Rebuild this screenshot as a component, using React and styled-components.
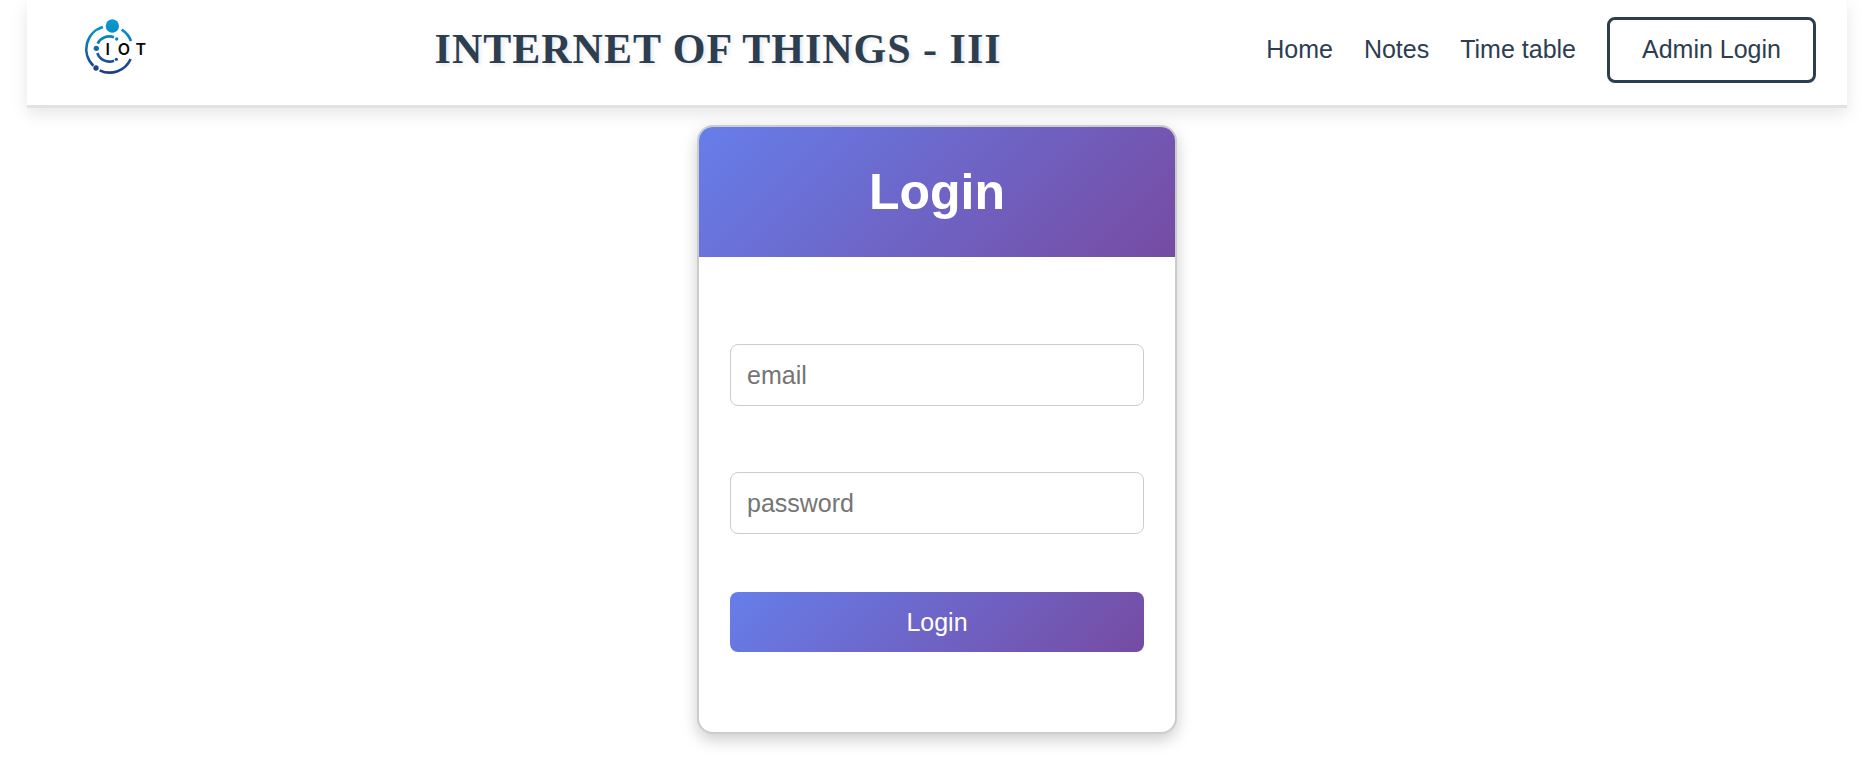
import React from "react";
import styled, { createGlobalStyle } from "styled-components";

const GlobalStyle = createGlobalStyle`
  *, *::before, *::after { box-sizing: border-box; }
  body {
    margin: 0;
    background: #fff;
    font-family: Arial, "Liberation Sans", sans-serif;
    font-size: 25px;
  }
`;

const brandGradient = "linear-gradient(135deg, #667eea 0%, #764ba2 100%)";

const Page = styled.div`
  padding: 0 29px 24px 27px;
`;

const Header = styled.header`
  display: flex;
  align-items: center;
  justify-content: space-between;
  padding: 17px 31px 22px 32px;
  background: #fff;
  border-bottom: 3px solid #e2e2e2;
  box-shadow: 0 6px 16px rgba(0, 0, 0, 0.1);
`;

const LogoLink = styled.a`
  display: block;
  padding: 0 23px 8px 24px;

  svg { display: block; }
`;

const SiteTitle = styled.h1`
  margin: 0;
  padding-bottom: 2px;
  color: #2c3e50;
  font-family: "Times New Roman", "Liberation Serif", serif;
  font-size: 42px;
  line-height: 48px;
  font-weight: 700;
  letter-spacing: 1px;
  text-shadow: 2px 2px 4px rgba(0, 0, 0, 0.1);
`;

const Nav = styled.nav`
  display: flex;
  align-items: center;
  gap: 31px;
`;

const NavLink = styled.a`
  padding-bottom: 2px;
  color: #2c3e50;
  line-height: 28px;
  text-decoration: none;
`;

const AdminButton = styled.button`
  padding: 15px 32px 17px;
  border: 3px solid #2c3e50;
  border-radius: 8px;
  background: transparent;
  color: #2c3e50;
  font: inherit;
  line-height: 28px;
  cursor: pointer;
`;

const Card = styled.main`
  width: 100%;
  max-width: 480px;
  margin: 17px auto 0;
  overflow: hidden;
  border: 2px solid #ccc;
  border-radius: 16px;
  background: #fff;
  box-shadow: 0 6px 16px rgba(0, 0, 0, 0.2);
`;

const CardHeader = styled.div`
  padding: 36px 31px;
  background: ${brandGradient};
  color: #fff;
  text-align: center;
`;

const CardTitle = styled.h2`
  margin: 0;
  font-size: 50px;
  line-height: 58px;
  font-weight: 700;
`;

const LoginForm = styled.form`
  display: flex;
  flex-direction: column;
  padding: 87px 31px 80px;
`;

const Field = styled.input`
  width: 100%;
  height: 62px;
  padding: 0 16px;
  border: 1px solid #ccc;
  border-radius: 8px;
  background: #fff;
  font: inherit;

  &::placeholder { color: #757575; }

  & + & { margin-top: 66px; }
`;

const SubmitButton = styled.button`
  height: 60px;
  margin-top: 58px;
  border: 0;
  border-radius: 8px;
  background: ${brandGradient};
  color: #fff;
  font: inherit;
  cursor: pointer;
`;

const LogoLetters = styled.text`
  font-family: Inter, sans-serif;
  font-size: 48px;
  font-weight: 600;
  text-anchor: middle;
  fill: #0a0a0a;
`;

function Logo() {
  return (
    <svg width="64" height="58" viewBox="39 27 192 174" role="img" aria-label="IOT">
      <defs>
        <linearGradient id="ring" gradientUnits="userSpaceOnUse" x1="0" y1="33" x2="0" y2="196">
          <stop offset="0" stopColor="#03a0d2" />
          <stop offset="0.4" stopColor="#0c7fba" />
          <stop offset="0.75" stopColor="#1a5199" />
          <stop offset="1" stopColor="#1d3c8a" />
        </linearGradient>
      </defs>
      <g fill="none" stroke="url(#ring)" strokeWidth="8">
        <path d="M99 57 A69 69 0 0 0 70 173" />
        <path d="M89 187 A69 69 0 0 0 182 153" />
        <path d="M155 65 A69 69 0 0 1 183 99" />
        <path d="M83 107 A38 38 0 0 1 132 88" />
        <path d="M82 135 A38 38 0 0 0 132 158" />
      </g>
      <g fill="url(#ring)">
        <circle cx="127" cy="54" r="20" />
        <circle cx="79" cy="121" r="8" />
        <circle cx="78" cy="180" r="8" />
        <circle cx="140" cy="93" r="5" />
        <circle cx="139" cy="154" r="5" />
      </g>
      <LogoLetters x="113 162 212" y="142">IOT</LogoLetters>
    </svg>
  );
}

export default function App() {
  return (
    <>
      <GlobalStyle />
      <Page>
        <Header>
          <LogoLink href="#home">
            <Logo />
          </LogoLink>
          <SiteTitle>INTERNET OF THINGS - III</SiteTitle>
          <Nav>
            <NavLink href="#home">Home</NavLink>
            <NavLink href="#notes">Notes</NavLink>
            <NavLink href="#timetable">Time table</NavLink>
            <AdminButton type="button">Admin Login</AdminButton>
          </Nav>
        </Header>
        <Card>
          <CardHeader>
            <CardTitle>Login</CardTitle>
          </CardHeader>
          <LoginForm onSubmit={(event) => event.preventDefault()}>
            <Field type="email" name="email" placeholder="email" aria-label="email" />
            <Field type="password" name="password" placeholder="password" aria-label="password" />
            <SubmitButton type="submit">Login</SubmitButton>
          </LoginForm>
        </Card>
      </Page>
    </>
  );
}
